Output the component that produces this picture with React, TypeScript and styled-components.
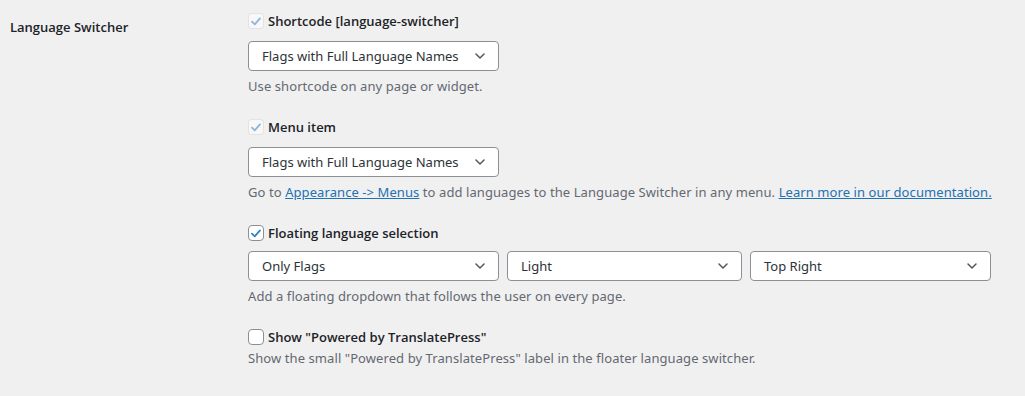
import styled, { createGlobalStyle } from "styled-components";

const GlobalStyle = createGlobalStyle`
  html, body {
    margin: 0;
    padding: 0;
    background: #f0f0f1;
  }
  body {
    font-family: "Noto Sans", "Open Sans", "Liberation Sans", sans-serif;
    font-size: 13px;
    color: #1d2327;
  }
`;

const FormRow = styled.div`
  display: grid;
  grid-template-columns: 239px 1fr;
  padding-left: 10px;
  width: 1025px;
  height: 396px;
  box-sizing: border-box;
`;

const RowLabel = styled.div`
  padding-top: 17px;
  font-family: "Open Sans", "Noto Sans", sans-serif;
  font-weight: 600;
  font-size: 13px;
  line-height: 20px;
  color: #1d2327;
`;

const Fields = styled.div`
  display: flex;
  flex-direction: column;
  padding-top: 9px;
  margin-left: -1px;
`;

const Group = styled.div`
  display: flex;
  flex-direction: column;
  margin-bottom: 19px;
`;

const CheckRow = styled.label`
  display: flex;
  align-items: center;
  gap: 4px;
  height: 24px;
  font-family: "Open Sans", "Noto Sans", sans-serif;
  font-weight: 600;
  font-size: 13px;
  color: #1d2327;
`;

const Box = styled.span<{ $disabled?: boolean }>`
  width: 16px;
  height: 16px;
  box-sizing: border-box;
  border-radius: 4px;
  border: 1px solid
    ${(p) => (p.$disabled ? "rgba(220, 220, 222, 0.75)" : "#8c8f94")};
  background: ${(p) => (p.$disabled ? "rgba(255, 255, 255, 0.5)" : "#fff")};
  display: flex;
  align-items: center;
  justify-content: center;
  flex-shrink: 0;

  svg {
    width: 15px;
    height: 15px;
    opacity: ${(p) => (p.$disabled ? 0.55 : 1)};
  }
`;

const SelectRow = styled.div<{ $top?: number }>`
  display: flex;
  gap: 8px;
  margin-top: ${(p) => p.$top ?? 8}px;
`;

const Select = styled.div<{ $width: number }>`
  width: ${(p) => p.$width}px;
  height: 30px;
  box-sizing: border-box;
  border: 1px solid #8c8f94;
  border-radius: 4px;
  background: #fff;
  display: flex;
  align-items: center;
  justify-content: space-between;
  padding: 0 10px 0 13px;
  font-size: 13px;
  color: #2c3338;

  svg {
    width: 16px;
    height: 16px;
  }
`;

const Desc = styled.p<{ $top?: number }>`
  margin: ${(p) => p.$top ?? 5}px 0 0;
  font-size: 13px;
  line-height: 20px;
  letter-spacing: 0.08px;
  color: #646970;
`;

const Link = styled.a`
  color: #2271b1;
  text-decoration: underline;
`;

const Check = () => (
  <svg viewBox="0 0 20 20">
    <path
      d="M4.3 10.3 L8.2 14 L15.7 5.6"
      fill="none"
      stroke="#3582c4"
      strokeWidth="2.6"
      strokeLinecap="round"
      strokeLinejoin="round"
    />
  </svg>
);

const Chevron = () => (
  <svg viewBox="0 0 16 16">
    <path
      d="M4 6 L8 10 L12 6"
      fill="none"
      stroke="#50575e"
      strokeWidth="1.5"
      strokeLinecap="round"
      strokeLinejoin="round"
    />
  </svg>
);

const Dropdown = ({ value, width }: { value: string; width: number }) => (
  <Select $width={width}>
    <span>{value}</span>
    <Chevron />
  </Select>
);

const App = (): JSX.Element => {
  return (
    <>
      <GlobalStyle />
      <FormRow>
        <RowLabel>Language Switcher</RowLabel>
        <Fields>
          <Group>
            <CheckRow>
              <Box $disabled>
                <Check />
              </Box>
              Shortcode [language-switcher]
            </CheckRow>
            <SelectRow>
              <Dropdown value="Flags with Full Language Names" width={251} />
            </SelectRow>
            <Desc>Use shortcode on any page or widget.</Desc>
          </Group>

          <Group>
            <CheckRow>
              <Box $disabled>
                <Check />
              </Box>
              Menu item
            </CheckRow>
            <SelectRow>
              <Dropdown value="Flags with Full Language Names" width={251} />
            </SelectRow>
            <Desc>
              Go to <Link href="#">Appearance -&gt; Menus</Link> to add
              languages to the Language Switcher in any menu.{" "}
              <Link href="#">Learn more in our documentation.</Link>
            </Desc>
          </Group>

          <Group>
            <CheckRow>
              <Box>
                <Check />
              </Box>
              Floating language selection
            </CheckRow>
            <SelectRow $top={6}>
              <Dropdown value="Only Flags" width={251} />
              <Dropdown value="Light" width={235} />
              <Dropdown value="Top Right" width={241} />
            </SelectRow>
            <Desc>Add a floating dropdown that follows the user on every page.</Desc>
          </Group>

          <Group>
            <CheckRow>
              <Box />
              Show "Powered by TranslatePress"
            </CheckRow>
            <Desc $top={-1}>
              Show the small "Powered by TranslatePress" label in the floater
              language switcher.
            </Desc>
          </Group>
        </Fields>
      </FormRow>
    </>
  );
};

export default App;
